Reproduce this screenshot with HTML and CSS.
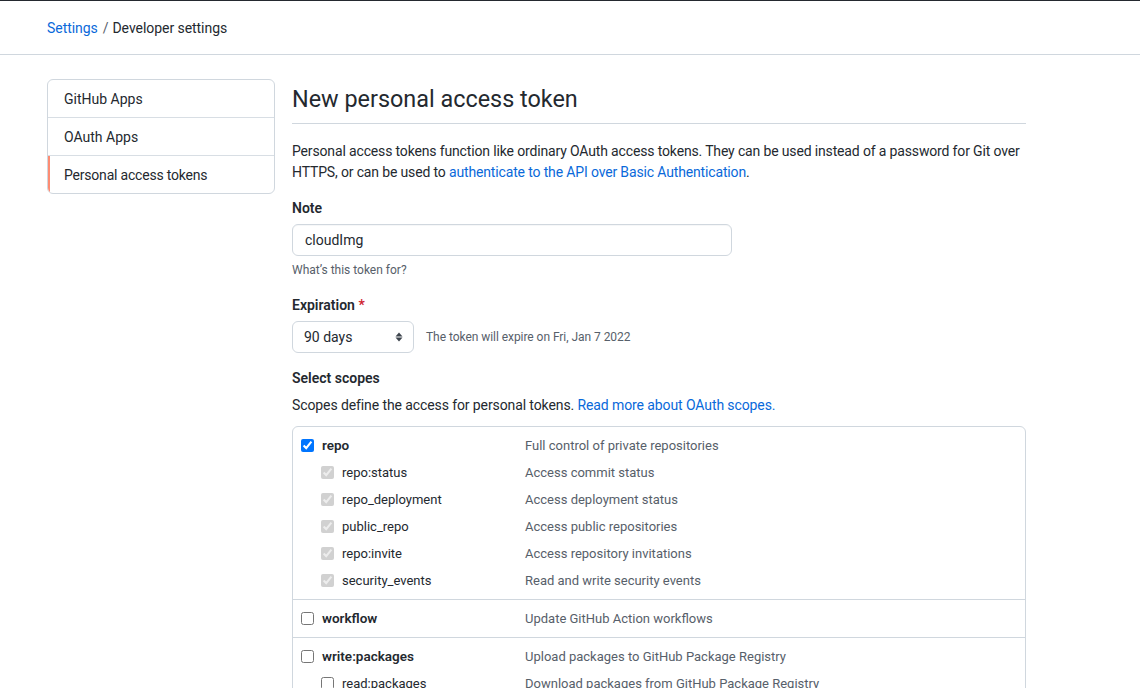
FILE: index.html
```html
<!DOCTYPE html>
<html lang="en">
<head>
<meta charset="utf-8">
<title>New personal access token</title>
<link rel="stylesheet" href="styles.css">
</head>
<body>
<header class="topbar">
  <nav class="crumbs"><a class="link" href="#">Settings</a><span class="sep">/</span><span class="crumb-current">Developer settings</span></nav>
</header>
<div class="layout">
  <aside class="sidebar">
    <a class="side-item" href="#">GitHub Apps</a>
    <a class="side-item" href="#">OAuth Apps</a>
    <a class="side-item selected" href="#">Personal access tokens</a>
  </aside>
  <main class="main">
    <div class="subhead"><h2 class="subhead-title">New personal access token</h2></div>
    <p class="intro">Personal access tokens function like ordinary OAuth access tokens. They can be used instead of a password for Git over HTTPS, or can be used to <a class="link" href="#">authenticate to the API over Basic Authentication</a>.</p>

    <div class="group">
      <div class="label">Note</div>
      <div class="input">cloudImg</div>
      <div class="note">What’s this token for?</div>
    </div>

    <div class="group">
      <div class="label">Expiration <span class="req">*</span></div>
      <div class="exp-row">
        <div class="select"><span>90 days</span>
          <svg class="caret" width="8" height="12" viewBox="0 0 8 12"><path d="M4 1.5 7.5 5.5H0.5Z M4 10.5 0.5 6.5H7.5Z" fill="#3d444d"/></svg>
        </div>
        <span class="exp-note">The token will expire on Fri, Jan 7 2022</span>
      </div>
    </div>

    <div class="group scopes-group">
      <div class="label">Select scopes</div>
      <p class="scopes-desc">Scopes define the access for personal tokens. <a class="link" href="#">Read more about OAuth scopes.</a></p>
      <div class="scopes">
        <div class="scope-group">
          <div class="row"><label class="name top"><input type="checkbox" checked>repo</label><span class="desc">Full control of private repositories</span></div>
          <div class="row"><label class="name sub"><input type="checkbox" checked disabled>repo:status</label><span class="desc">Access commit status</span></div>
          <div class="row"><label class="name sub"><input type="checkbox" checked disabled>repo_deployment</label><span class="desc">Access deployment status</span></div>
          <div class="row"><label class="name sub"><input type="checkbox" checked disabled>public_repo</label><span class="desc">Access public repositories</span></div>
          <div class="row"><label class="name sub"><input type="checkbox" checked disabled>repo:invite</label><span class="desc">Access repository invitations</span></div>
          <div class="row"><label class="name sub"><input type="checkbox" checked disabled>security_events</label><span class="desc">Read and write security events</span></div>
        </div>
        <div class="scope-group">
          <div class="row"><label class="name top"><input type="checkbox">workflow</label><span class="desc">Update GitHub Action workflows</span></div>
        </div>
        <div class="scope-group">
          <div class="row"><label class="name top"><input type="checkbox">write:packages</label><span class="desc">Upload packages to GitHub Package Registry</span></div>
          <div class="row"><label class="name sub"><input type="checkbox">read:packages</label><span class="desc">Download packages from GitHub Package Registry</span></div>
        </div>
      </div>
    </div>
  </main>
</div>
</body>
</html>
```

FILE: styles.css
```css
* { box-sizing: border-box; }
html, body { margin: 0; padding: 0; background: #ffffff; }
body {
  font-family: Roboto, "Liberation Sans", Arial, sans-serif;
  font-size: 14px;
  line-height: 21px;
  color: #24292f;
  height: 688px;
  overflow: hidden;
}
a { text-decoration: none; }
.link { color: #0969da; }

.topbar {
  border-top: 1px solid #24292f;
  border-bottom: 1px solid #d0d7de;
  height: 55px;
  display: flex;
  align-items: center;
  padding: 2px 0 0 47px;
}
.crumbs { font-size: 14px; display: flex; align-items: center; letter-spacing: -0.05px; }
.sep { color: #57606a; padding: 0 4px 0 5px; }
.crumb-current { color: #24292f; }

.layout {
  display: flex;
  align-items: flex-start;
  gap: 17px;
  padding: 24px 0 0 47px;
}
.sidebar {
  width: 228px;
  flex: none;
  border: 1px solid #d0d7de;
  border-radius: 6px;
  overflow: hidden;
}
.side-item {
  display: block;
  padding: 9px 16px 7px;
  color: #24292f;
  border-top: 1px solid #d8dee4;
}
.side-item:first-child { border-top: 0; }
.side-item.selected { box-shadow: inset 2px 0 0 #fd8c73; letter-spacing: -0.2px; }

.main { width: 734px; flex: none; }
.subhead { border-bottom: 1px solid #d0d7de; padding: 2px 0 6px; }
.subhead-title { margin: 0; font-size: 23.4px; line-height: 36px; font-weight: 400; }
.intro { margin: 17px 0 14px; letter-spacing: -0.15px; }

.group { margin: 14px 0 15px; }
.label { font-weight: 600; margin-bottom: 6px; padding-top: 1px; line-height: 20px; }
.scopes-group > .label { padding-top: 0; line-height: 21px; }
.req { color: #cf222e; }
.input {
  width: 440px;
  height: 32px;
  border: 1px solid #d0d7de;
  border-radius: 6px;
  padding: 1px 12px 0;
  display: flex;
  align-items: center;
  box-shadow: inset 0 1px 0 rgba(208,215,222,0.2);
}
.note { font-size: 12px; line-height: 18px; color: #57606a; margin-top: 5px; }

.exp-row { display: flex; align-items: center; gap: 12px; }
.select {
  width: 122px;
  height: 32px;
  border: 1px solid #d0d7de;
  border-radius: 6px;
  padding: 0 10px 0 11px;
  display: flex;
  align-items: center;
  justify-content: space-between;
}
.caret { display: block; }
.exp-note { font-size: 12px; color: #57606a; letter-spacing: -0.05px; }

.scopes-desc { margin: 0 0 10px; letter-spacing: -0.1px; }
.scopes { border: 1px solid #d0d7de; border-radius: 6px; font-size: 13px; }
.scope-group { padding: 5px 8px; border-top: 1px solid #d0d7de; }
.scope-group:first-child { border-top: 0; }
.row { display: flex; align-items: center; height: 27px; }
.name { width: 224px; flex: none; display: flex; align-items: center; gap: 8px; }
.name input { margin: 0; width: 13px; height: 13px; flex: none; }
.name.top { font-weight: 600; font-size: 13.5px; }
.name.sub { padding-left: 20px; }
.desc { color: #57606a; }
```
